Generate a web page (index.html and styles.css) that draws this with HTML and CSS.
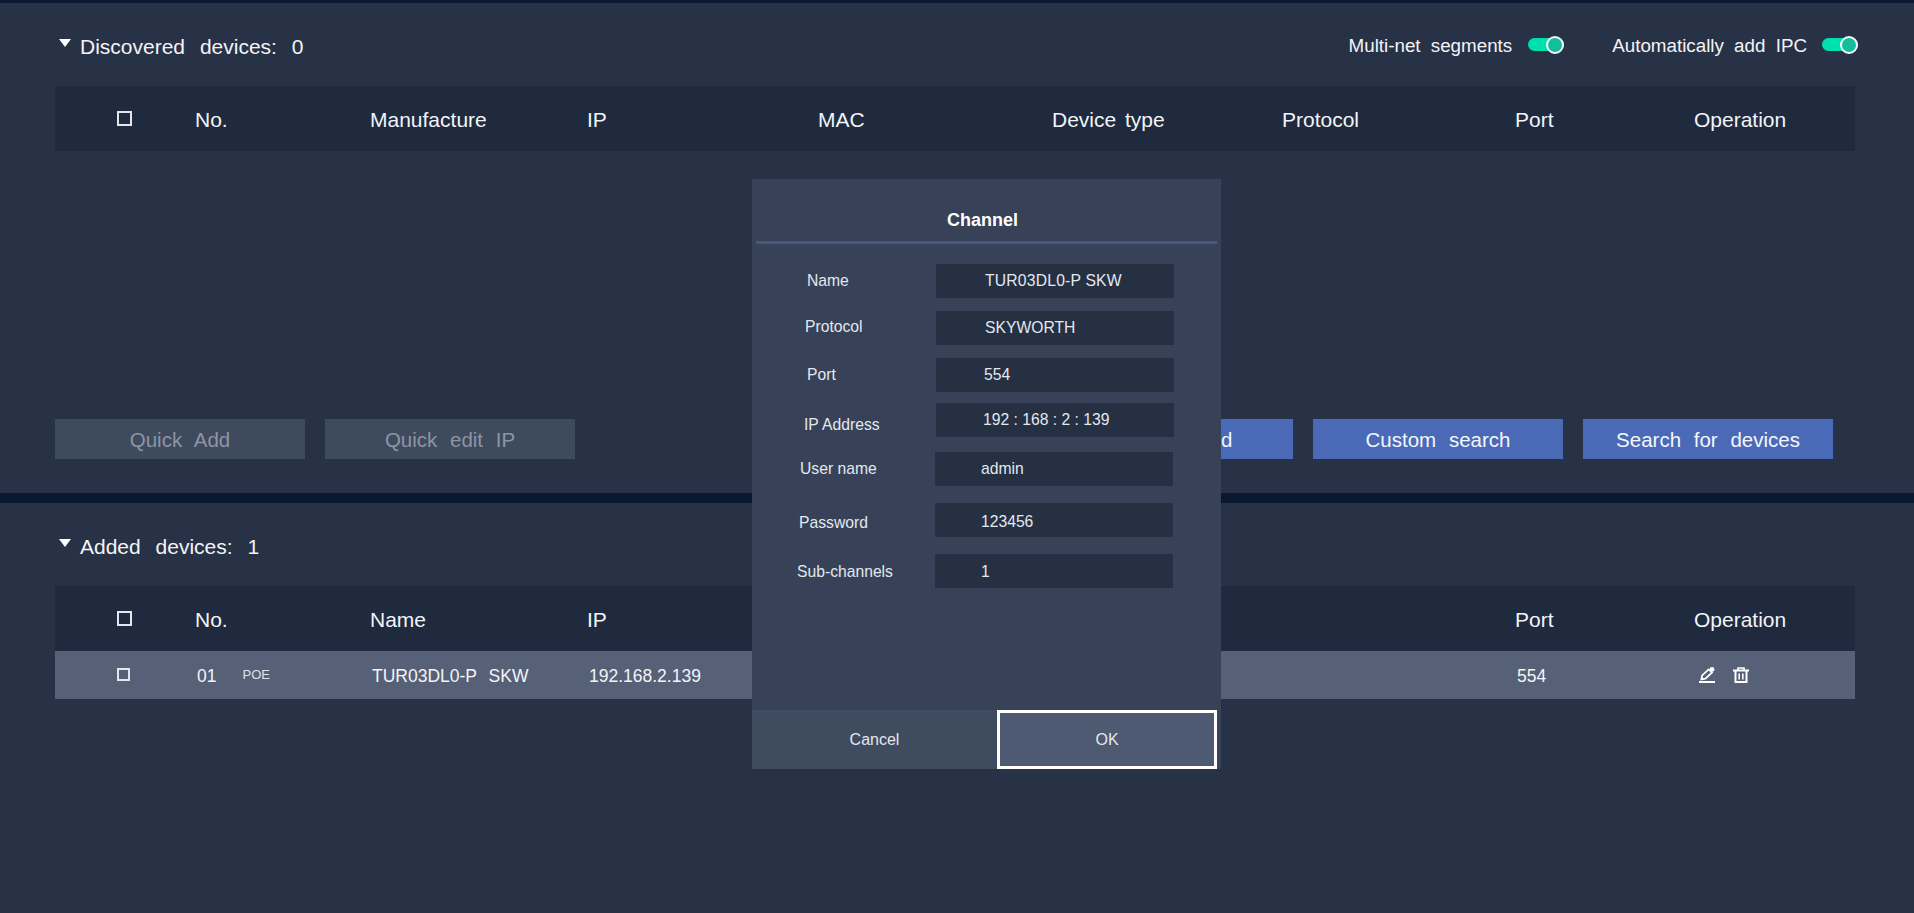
FILE: index.html
```html
<!DOCTYPE html>
<html lang="en">
<head>
    <meta charset="UTF-8">
    <meta name="viewport" content="width=device-width, initial-scale=1.0">
    <title>Channel</title>
    <link rel="stylesheet" href="styles.css">
</head>
<body>
    <div class="top-bar"></div>

    <section class="panel panel-discovered">
        <div class="section-head">
            <span class="caret"></span>
            <h2 class="section-title">Discovered devices: 0</h2>
            <div class="switches">
                <span class="switch-label switch-label-first">Multi-net segments</span>
                <span class="toggle"><span class="toggle-knob"></span></span>
                <span class="switch-label switch-label-next">Automatically add IPC</span>
                <span class="toggle"><span class="toggle-knob"></span></span>
            </div>
        </div>
        <div class="table-row table-head">
            <span class="check"></span>
            <span>No.</span>
            <span>Manufacture</span>
            <span>IP</span>
            <span>MAC</span>
            <span>Device type</span>
            <span>Protocol</span>
            <span>Port</span>
            <span>Operation</span>
        </div>
        <div class="actions">
            <button class="button button-off">Quick Add</button>
            <button class="button button-off">Quick edit IP</button>
            <button class="button button-blue button-push">Manually add</button>
            <button class="button button-blue">Custom search</button>
            <button class="button button-blue">Search for devices</button>
        </div>
    </section>

    <section class="panel panel-added">
        <div class="section-head">
            <span class="caret"></span>
            <h2 class="section-title">Added devices: 1</h2>
        </div>
        <div class="table-row table-head">
            <span class="check"></span>
            <span>No.</span>
            <span>Name</span>
            <span>IP</span>
            <span>MAC</span>
            <span>Device type</span>
            <span></span>
            <span>Port</span>
            <span>Operation</span>
        </div>
        <div class="table-row table-data">
            <span class="check check-small"></span>
            <span class="cell-no">01<small class="poe">POE</small></span>
            <span class="cell-shift">TUR03DL0-P SKW</span>
            <span class="cell-shift">192.168.2.139</span>
            <span></span>
            <span></span>
            <span></span>
            <span class="cell-shift">554</span>
            <span class="ops">
                <svg class="icon" viewBox="0 0 16 16" fill="none" stroke="#fff">
                    <path d="M0 15h16" stroke-width="2"/>
                    <path d="M2.4 12.4 3.2 8.4 9.6 2.4 13 5.4 6.4 11.6Z" stroke-width="1.8"/>
                    <circle cx="13" cy="2.4" r="2.4" fill="#fff" stroke="none"/>
                </svg>
                <svg class="icon" viewBox="0 0 16 16" fill="none" stroke="#fff">
                    <path d="M0 3.5h16" stroke-width="2"/>
                    <path d="M5 3V1h6v2" stroke-width="1.6"/>
                    <path d="M2.5 4v11h11V4" stroke-width="2"/>
                    <path d="M6.2 6.5v6M9.8 6.5v6" stroke-width="1.6"/>
                </svg>
            </span>
        </div>
    </section>

    <div class="dialog">
        <h3 class="dialog-title">Channel</h3>
        <div class="fields">
            <div class="field field-name">
                <span class="field-label">Name</span>
                <span class="field-value">TUR03DL0-P SKW</span>
            </div>
            <div class="field field-protocol">
                <span class="field-label">Protocol</span>
                <span class="field-value">SKYWORTH</span>
            </div>
            <div class="field field-port">
                <span class="field-label">Port</span>
                <span class="field-value">554</span>
            </div>
            <div class="field field-ip">
                <span class="field-label">IP Address</span>
                <span class="field-value">192 : 168 : 2 : 139</span>
            </div>
            <div class="field field-user">
                <span class="field-label">User name</span>
                <span class="field-value">admin</span>
            </div>
            <div class="field field-pass">
                <span class="field-label">Password</span>
                <span class="field-value">123456</span>
            </div>
            <div class="field field-sub">
                <span class="field-label">Sub-channels</span>
                <span class="field-value">1</span>
            </div>
        </div>
        <div class="dialog-buttons">
            <button class="dialog-button dialog-cancel">Cancel</button>
            <button class="dialog-button dialog-ok">OK</button>
        </div>
    </div>
</body>
</html>
```

FILE: styles.css
```css
body {
    margin: 0;
    height: 913px;
    overflow: hidden;
    background-color: #0a1730;
    color: #f2f4f7;
    font-family: "Liberation Sans", Arial, sans-serif;
}

.top-bar {
    height: 3px;
}

.panel {
    display: flex;
    flex-direction: column;
    padding: 0 59px 0 55px;
    background-color: #283246;
}

.panel-discovered {
    height: 490px;
    margin-bottom: 10px;
}

.panel-added {
    height: 410px;
}

.section-head {
    display: flex;
    align-items: center;
    height: 83px;
    flex-shrink: 0;
}

.caret {
    width: 0;
    height: 0;
    margin: 0 9px 3px 4px;
    border-left: 6.5px solid transparent;
    border-right: 6.5px solid transparent;
    border-top: 8px solid #fff;
}

.section-title {
    margin: 4px 0 0;
    font-size: 21px;
    font-weight: normal;
    word-spacing: 9px;
}

.switches {
    display: flex;
    align-items: center;
    margin-left: auto;
    margin-right: -3px;
}

.switch-label {
    margin: 3px 15px 0 0;
    font-size: 18.8px;
    word-spacing: 5px;
}

.switch-label-first {
    margin-right: 16px;
}

.switch-label-next {
    margin-left: 48px;
}

.toggle {
    display: flex;
    align-items: center;
    justify-content: flex-end;
    width: 36px;
    height: 13px;
    border-radius: 7px;
    background-color: #00dfae;
}

.toggle-knob {
    box-sizing: border-box;
    width: 18px;
    height: 18px;
    border: 2px solid #f4f7f8;
    border-radius: 50%;
    background-color: #14bd9b;
}

.table-row {
    display: grid;
    grid-template-columns: 78px 175px 217px 231px 234px 230px 233px 179px 1fr;
    align-items: center;
    padding-left: 62px;
}

.table-head {
    height: 65px;
    flex-shrink: 0;
    padding-top: 2px;
    box-sizing: border-box;
    background-color: #1f2a3f;
    font-size: 21px;
    word-spacing: 3px;
}

.table-data {
    height: 48px;
    padding-top: 2px;
    box-sizing: border-box;
    background-color: #566077;
    font-size: 17.5px;
}

.check {
    box-sizing: border-box;
    width: 15px;
    height: 15px;
    margin-top: -3px;
    border: 2px solid #e3e6ec;
}

.check-small {
    width: 13px;
    height: 13px;
    margin-top: -3px;
}

.cell-no {
    display: flex;
    align-items: center;
    padding-left: 2px;
}

.poe {
    margin: -3px 0 0 26px;
    font-size: 13px;
    color: #dde1e8;
}

.cell-shift {
    padding-left: 2px;
    word-spacing: 7px;
}

.ops {
    display: flex;
    gap: 18px;
    padding-left: 5px;
    margin-top: -3px;
}

.icon {
    width: 16px;
    height: 16px;
}

.actions {
    display: flex;
    gap: 20px;
    margin: auto 22px 34px 0;
}

.button {
    width: 250px;
    height: 40px;
    padding: 2px 0 0;
    border: none;
    font-family: inherit;
    font-size: 20.5px;
    word-spacing: 7px;
}

.button-off {
    background-color: #3e4a5e;
    color: #8d95a3;
}

.button-blue {
    background-color: #4a6ab8;
    color: #f4f6fa;
}

.button-push {
    margin-left: auto;
}

.dialog {
    position: absolute;
    top: 179px;
    left: 752px;
    display: flex;
    flex-direction: column;
    width: 469px;
    height: 590px;
    background-color: #374259;
}

.dialog-title {
    box-sizing: border-box;
    height: 65px;
    margin: 0 4px;
    padding: 30px 8px 0 0;
    border-bottom: 3px solid #46597a;
    font-size: 18px;
    line-height: 22px;
    text-align: center;
    color: #fff;
}

.fields {
    display: flex;
    flex-direction: column;
    flex: 1;
    padding-top: 20px;
    font-size: 15.7px;
    color: #e4e8ee;
}

.field {
    display: flex;
    align-items: center;
    height: 34px;
    flex-shrink: 0;
}

.field-label {
    width: 184px;
    flex-shrink: 0;
    box-sizing: border-box;
}

.field-value {
    display: flex;
    align-items: center;
    box-sizing: border-box;
    width: 238px;
    height: 34px;
    background-color: #253043;
}

.field-name .field-label { padding-left: 55px; }
.field-name .field-value { padding-left: 49px; letter-spacing: .2px; }

.field-protocol { margin-top: 13px; }
.field-protocol .field-label { padding: 0 0 3px 53px; }
.field-protocol .field-value { padding-left: 49px; }

.field-port { margin-top: 13px; }
.field-port .field-label { padding-left: 55px; }
.field-port .field-value { padding-left: 48px; }

.field-ip { margin-top: 11px; }
.field-ip .field-label { padding: 9px 0 0 52px; }
.field-ip .field-value { padding: 0 0 1px 47px; }

.field-user { margin-top: 15px; }
.field-user .field-label { width: 183px; padding-left: 48px; }
.field-user .field-value { padding: 0 0 1px 46px; }

.field-pass { margin-top: 17px; }
.field-pass .field-label { width: 183px; padding: 5px 0 0 47px; }
.field-pass .field-value { padding: 3px 0 0 46px; }

.field-sub { margin-top: 17px; }
.field-sub .field-label { width: 183px; padding: 1px 0 0 45px; }
.field-sub .field-value { padding: 1px 0 0 46px; }

.dialog-buttons {
    display: flex;
    height: 59px;
    flex-shrink: 0;
}

.dialog-button {
    padding: 0;
    border: none;
    font-family: inherit;
    font-size: 16px;
    color: #e4e8ee;
}

.dialog-cancel {
    width: 245px;
    background-color: #3f4c60;
}

.dialog-ok {
    box-sizing: border-box;
    width: 220px;
    border: 3px solid #fff;
    background-color: #4d5a72;
}
```
